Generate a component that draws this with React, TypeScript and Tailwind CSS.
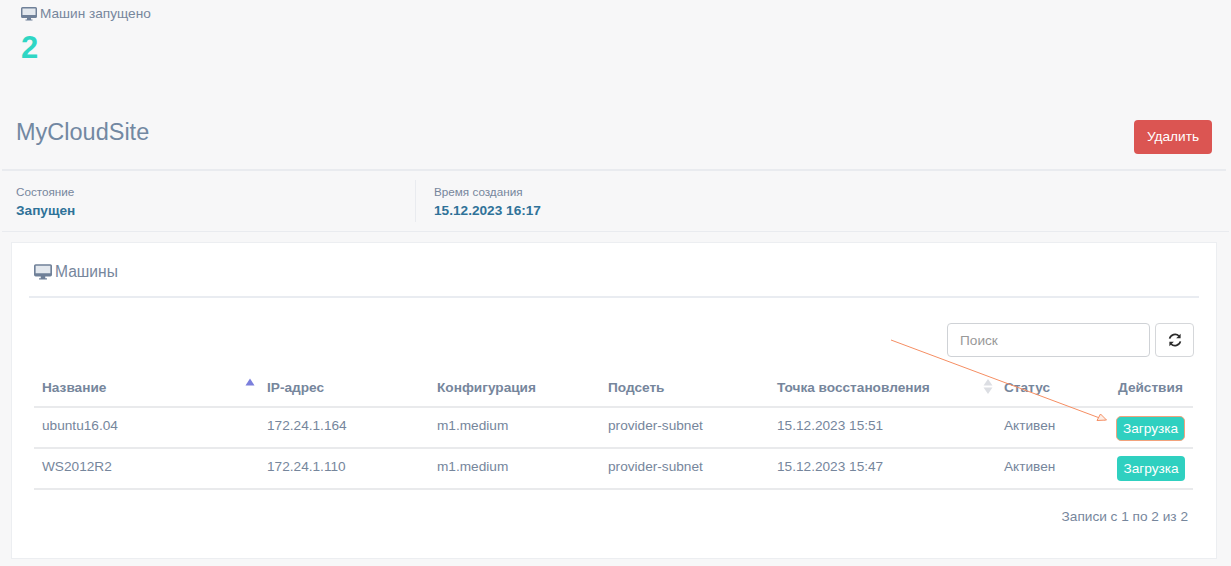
import React from "react";

const rows = [
  { name: "ubuntu16.04", ip: "172.24.1.164", time: "15.12.2023 15:51", ring: true },
  { name: "WS2012R2", ip: "172.24.1.110", time: "15.12.2023 15:47", ring: false },
];

function Desktop({ className }: { className: string }) {
  return (
    <svg viewBox="0 0 16 14" className={className}>
      <rect x="1.5" y="1" width="13" height="8.5" fill="#e3e8ee" />
      <path
        fillRule="evenodd"
        d="M1.5 0 H14.5 A1.5 1.5 0 0 1 16 1.5 V9.5 A1.5 1.5 0 0 1 14.5 11 H10 V12.5 H11.5 V13.6 H4.5 V12.5 H6 V11 H1.5 A1.5 1.5 0 0 1 0 9.5 V1.5 A1.5 1.5 0 0 1 1.5 0 Z M1.5 1.5 V8 H14.5 V1.5 Z"
        fill="#6f8098"
      />
    </svg>
  );
}

function Refresh() {
  return (
    <svg viewBox="0 0 14 14" className="h-[14px] w-[14px]" fill="none">
      <path d="M1.6 5.6 A5.6 5.6 0 0 1 11 3" stroke="#2b2b2b" strokeWidth="1.7" />
      <path d="M12.6 0.8 V5.2 H8.2 Z" fill="#2b2b2b" />
      <path d="M12.4 8.4 A5.6 5.6 0 0 1 3 11" stroke="#2b2b2b" strokeWidth="1.7" />
      <path d="M1.4 13.2 V8.8 H5.8 Z" fill="#2b2b2b" />
    </svg>
  );
}

function SortUp() {
  return (
    <svg width="10" height="8" viewBox="0 0 10 8" className="absolute right-[4px] top-[9px]">
      <path d="M5 0.5 L9.5 7.5 L0.5 7.5 Z" fill="#7b7fdc" />
    </svg>
  );
}

function SortBoth() {
  return (
    <svg width="10" height="15" viewBox="0 0 10 15" className="absolute right-[3px] top-[10px]">
      <path d="M5 0 L9.5 6.5 L0.5 6.5 Z" fill="#dcdee3" />
      <path d="M5 15 L9.5 8.5 L0.5 8.5 Z" fill="#dcdee3" />
    </svg>
  );
}

export default function App() {
  return (
    <div className="relative h-[566px] w-[1231px] overflow-hidden bg-[#f7f7f8] font-['Liberation_Sans',Arial,sans-serif] text-[#76869c]">
      <div className="h-[106px] pl-[21px] pt-[5px]">
        <div className="flex h-[18px] items-center gap-[3px] text-[13.65px] leading-[18px]">
          <Desktop className="h-[14px] w-[16px]" />
          <span>Машин запущено</span>
        </div>
        <div className="mt-[7px] text-[31px] font-bold leading-[36px] text-[#2fd6c4]">2</div>
      </div>

      <div className="mx-[2px] mr-[5px] flex h-[65px] justify-between border-b-2 border-[#e9ebef] pl-[14px] pr-[14px] pt-[14px]">
        <div className="-mt-[1px] text-[23.5px] leading-[27px] text-[#7288a2]">MyCloudSite</div>
        <button className="h-[34px] w-[78px] rounded-[4px] bg-[#db5552] text-[13.65px] text-white">Удалить</button>
      </div>

      <div className="mx-[2px] flex h-[61px] border-b border-[#e9ebef] pl-[14px] pt-[9px]">
        <div className="h-[42px] w-[400px] border-r border-[#e9ebef]">
          <div className="text-[11.7px] leading-[24px] text-[#76869c]">Состояние</div>
          <div className="-mt-[1px] text-[13.65px] font-bold leading-[16px] text-[#2f7298]">Запущен</div>
        </div>
        <div className="pl-[18px]">
          <div className="text-[11.7px] leading-[24px] text-[#76869c]">Время создания</div>
          <div className="-mt-[1px] text-[13.65px] font-bold leading-[16px] text-[#2f7298]">15.12.2023 16:17</div>
        </div>
      </div>

      <div className="ml-[11px] mt-[10px] h-[317px] w-[1206px] border border-[#eceef1] bg-white px-[17px]">
        <div className="flex h-[55px] items-center gap-[3px] border-b-2 border-[#e9ecf1] pt-[4px] text-[15.6px] text-[#76869c]">
          <span className="flex items-center pl-[5px]">
            <Desktop className="h-[16px] w-[18px]" />
          </span>
          <span>Машины</span>
        </div>

        <div className="flex h-[71px] items-start justify-end gap-[5px] pr-[5px] pt-[25px]">
          <input
            placeholder="Поиск"
            className="h-[34px] w-[203px] rounded-[4px] border border-[#cfd2d6] bg-white px-[12px] text-[13.65px] outline-none placeholder:text-[#999999]"
          />
          <button className="flex h-[34px] w-[39px] items-center justify-center rounded-[4px] border border-[#d5d7da] bg-white">
            <Refresh />
          </button>
        </div>

        <table className="ml-[5px] w-[1159px] table-fixed border-collapse text-left text-[13.65px]">
          <colgroup>
            <col className="w-[225px]" />
            <col className="w-[170px]" />
            <col className="w-[171px]" />
            <col className="w-[169px]" />
            <col className="w-[227px]" />
            <col className="w-[114px]" />
            <col className="w-[83px]" />
          </colgroup>
          <thead>
            <tr className="h-[38px] border-b-2 border-[#e9eaec]">
              <th className="relative pl-[8px] pt-[2px] font-bold">Название<SortUp /></th>
              <th className="pl-[8px] pt-[2px] font-bold">IP-адрес</th>
              <th className="pl-[8px] pt-[2px] font-bold">Конфигурация</th>
              <th className="pl-[8px] pt-[2px] font-bold">Подсеть</th>
              <th className="relative pl-[8px] pt-[2px] font-bold">Точка восстановления<SortBoth /></th>
              <th className="pl-[8px] pt-[2px] font-bold">Статус</th>
              <th className="pl-[8px] pt-[2px] font-bold">Действия</th>
            </tr>
          </thead>
          <tbody>
            {rows.map((r) => (
              <tr key={r.name} className="h-[41px] border-b-2 border-[#e9eaec]">
                <td className="pb-[2px] pl-[8px]">{r.name}</td>
                <td className="pb-[2px] pl-[8px]">{r.ip}</td>
                <td className="pb-[2px] pl-[8px]">m1.medium</td>
                <td className="pb-[2px] pl-[8px]">provider-subnet</td>
                <td className="pb-[2px] pl-[8px]">{r.time}</td>
                <td className="pb-[2px] pl-[8px]">Активен</td>
                <td className="pl-[7px]">
                  <button
                    className={
                      r.ring
                        ? "-ml-px mt-[1px] block h-[25px] w-[69px] rounded-[5px] border border-[#f2a27c] bg-[#2fd0c0] text-center text-[13.65px] leading-[23px] text-white"
                        : "block h-[25px] w-[68px] rounded-[4px] bg-[#2fd0c0] text-center text-[13.65px] leading-[25px] text-white"
                    }
                  >
                    Загрузка
                  </button>
                </td>
              </tr>
            ))}
          </tbody>
        </table>

        <div className="pr-[11px] pt-[18px] text-right text-[13.65px] leading-[18px] text-[#76869c]">Записи с 1 по 2 из 2</div>
      </div>

      <svg className="pointer-events-none absolute left-0 top-0" width="1231" height="566" viewBox="0 0 1231 566">
        <line x1="891" y1="340" x2="1105" y2="420" stroke="#f58e63" strokeWidth="1" />
        <path d="M1106.5 420 L1097 420.5 L1100.5 414 Z" fill="#fdeee6" stroke="#f58e63" strokeWidth="1" />
      </svg>
    </div>
  );
}
